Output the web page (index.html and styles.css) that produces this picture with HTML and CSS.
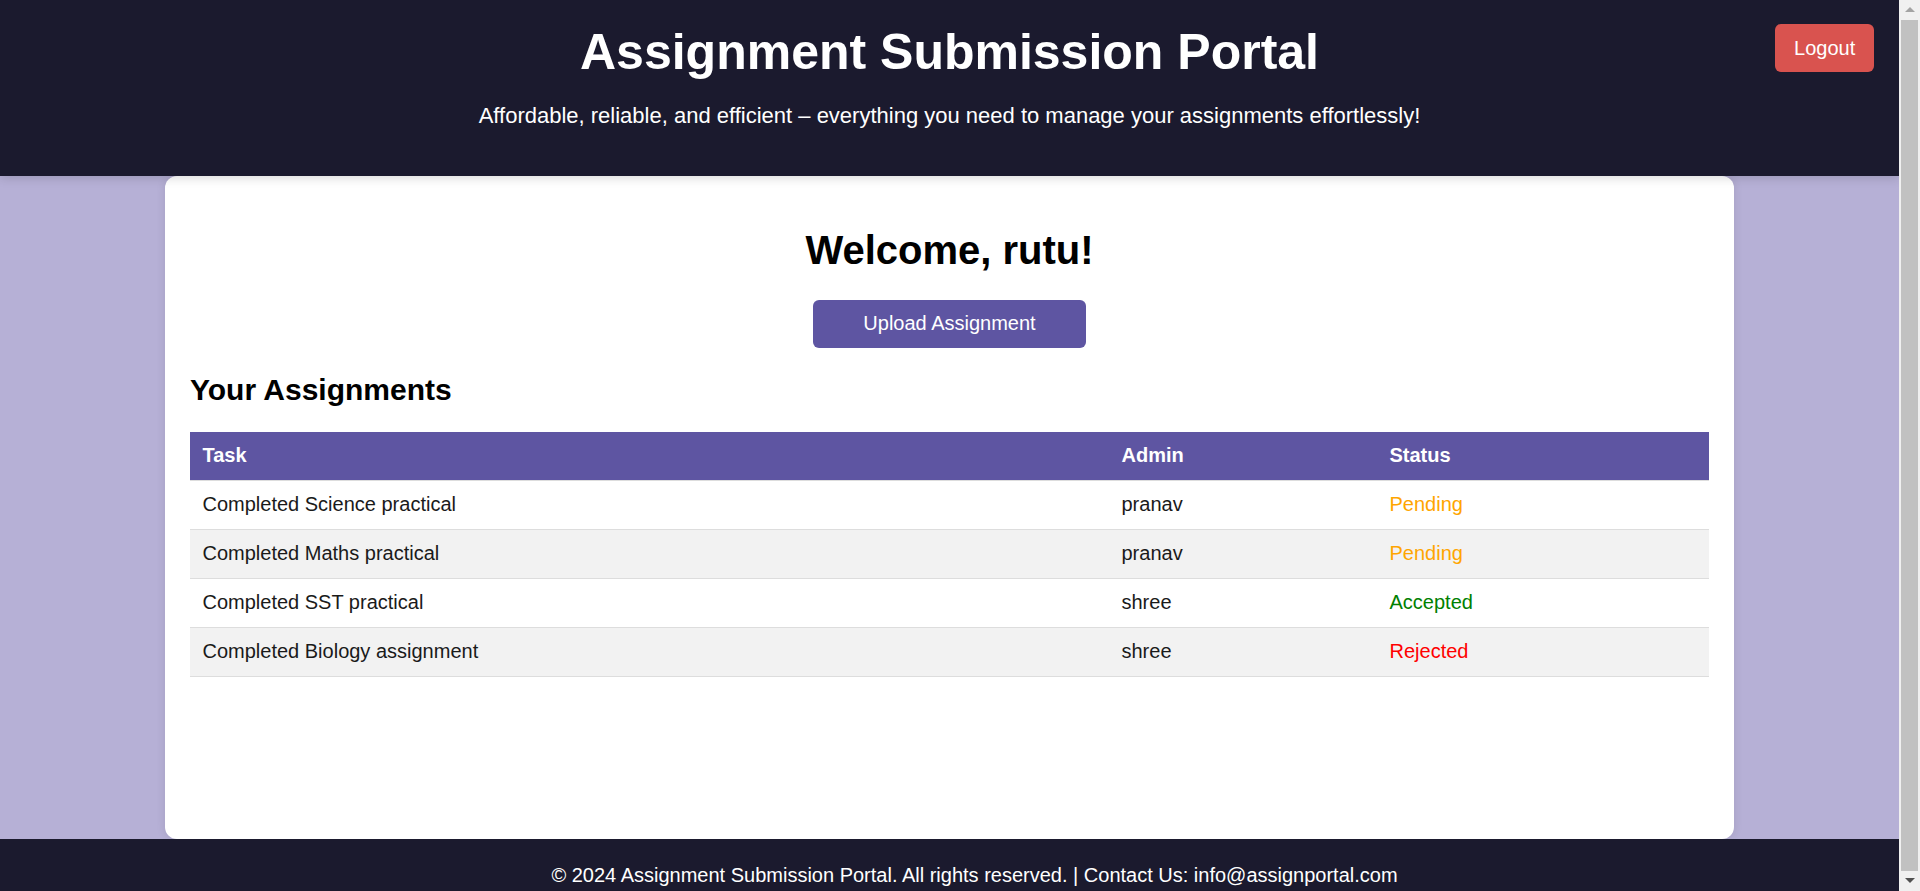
FILE: index.html
```html
<!DOCTYPE html>
<html lang="en">
<head>
<meta charset="UTF-8">
<title>Assignment Submission Portal</title>
<link rel="stylesheet" href="styles.css">
</head>
<body>
<header class="site-header">
  <h1 class="site-title">Assignment Submission Portal</h1>
  <p class="tagline">Affordable, reliable, and efficient – everything you need to manage your assignments effortlessly!</p>
  <button class="logout-btn">Logout</button>
</header>
<main class="card">
  <h1 class="welcome">Welcome, rutu!</h1>
  <div class="actions">
    <button class="upload-btn">Upload Assignment</button>
  </div>
  <h2 class="section-title">Your Assignments</h2>
  <table class="assign-table">
    <colgroup>
      <col class="col-task">
      <col class="col-admin">
      <col class="col-status">
    </colgroup>
    <thead>
      <tr><th>Task</th><th>Admin</th><th>Status</th></tr>
    </thead>
    <tbody>
      <tr><td>Completed Science practical</td><td>pranav</td><td class="st-pending">Pending</td></tr>
      <tr><td>Completed Maths practical</td><td>pranav</td><td class="st-pending">Pending</td></tr>
      <tr><td>Completed SST practical</td><td>shree</td><td class="st-accepted">Accepted</td></tr>
      <tr><td>Completed Biology assignment</td><td>shree</td><td class="st-rejected">Rejected</td></tr>
    </tbody>
  </table>
</main>
<footer class="site-footer">
  © 2024 Assignment Submission Portal. All rights reserved. | Contact Us: info@assignportal.com
</footer>
<div class="scrollbar" aria-hidden="true">
  <span class="sb-arrow sb-up"></span>
  <span class="sb-thumb"></span>
  <span class="sb-arrow sb-down"></span>
</div>
</body>
</html>
```

FILE: styles.css
```css
* { box-sizing: content-box; }
html, body { margin: 0; padding: 0; }
body {
  font-family: "Liberation Sans", Arial, sans-serif;
  font-size: 20px;
  background: #b6b0d6;
  color: #1a1a1a;
  padding-right: 21px;
}
.site-header {
  position: relative;
  background: #1b1a2e;
  color: #fff;
  text-align: center;
  padding: 23px 0 47.5px;
  box-shadow: 0 2px 10px rgba(0, 0, 0, 0.15);
  z-index: 1;
}
.site-title {
  margin: 0;
  font-size: 50px;
  font-weight: bold;
}
.tagline {
  margin: 21.7px 0 0;
  font-size: 22px;
}
.logout-btn {
  position: absolute;
  top: 24px;
  right: 25px;
  background: #d9534f;
  color: #fff;
  border: none;
  border-radius: 6px;
  padding: 12.5px 18.75px;
  font-family: inherit;
  font-size: 20px;
  line-height: 23px;
}
.card {
  display: block;
  width: 1519px;
  min-height: 613px;
  margin: 0 auto;
  padding: 25px;
  background: #fff;
  border-radius: 12px;
  box-shadow: 0 0 10px rgba(0, 0, 0, 0.1);
}
.welcome {
  margin: 26.8px 0;
  font-size: 40px;
  text-align: center;
  color: #000;
}
.actions {
  display: flex;
  justify-content: center;
}
.upload-btn {
  background: #5e55a2;
  color: #fff;
  border: none;
  border-radius: 6px;
  padding: 12.5px 50px;
  font-family: inherit;
  font-size: 20px;
  line-height: 23px;
}
.section-title {
  margin: 24.9px 0;
  font-size: 30px;
  color: #000;
}
.assign-table {
  width: 100%;
  border-collapse: collapse;
}
.col-task { width: 919px; }
.col-admin { width: 268px; }
.col-status { width: 332px; }
.assign-table th,
.assign-table td {
  padding: 12.5px;
  text-align: left;
  border-bottom: 1px solid #ddd;
  line-height: 23px;
}
.assign-table th {
  background: #5e55a2;
  color: #fff;
  font-weight: bold;
}
.assign-table tbody tr:nth-child(even) { background: #f2f2f2; }
.st-pending { color: #ffa500; }
.st-accepted { color: #008000; }
.st-rejected { color: #ff0000; }
.site-footer {
  background: #1b1a2e;
  color: #fff;
  text-align: center;
  padding: 25px 0 25px 50px;
  font-size: 20px;
  line-height: 23px;
}
.scrollbar {
  position: fixed;
  top: 0;
  right: 0;
  bottom: 0;
  width: 21px;
  background: #f0f0f0;
  display: flex;
  flex-direction: column;
  align-items: center;
  z-index: 10;
}
.sb-arrow {
  width: 0;
  height: 0;
  display: block;
}
.sb-up {
  margin-top: 7px;
  flex: 0 0 auto;
  border-left: 5px solid transparent;
  border-right: 5px solid transparent;
  border-bottom: 5px solid #a3a3a3;
}
.sb-thumb {
  flex: 1;
  width: 17px;
  margin: 8px 0 7px;
  background: #c1c1c1;
}
.sb-down {
  margin-bottom: 8px;
  flex: 0 0 auto;
  border-left: 5px solid transparent;
  border-right: 5px solid transparent;
  border-top: 5px solid #505050;
}
```
